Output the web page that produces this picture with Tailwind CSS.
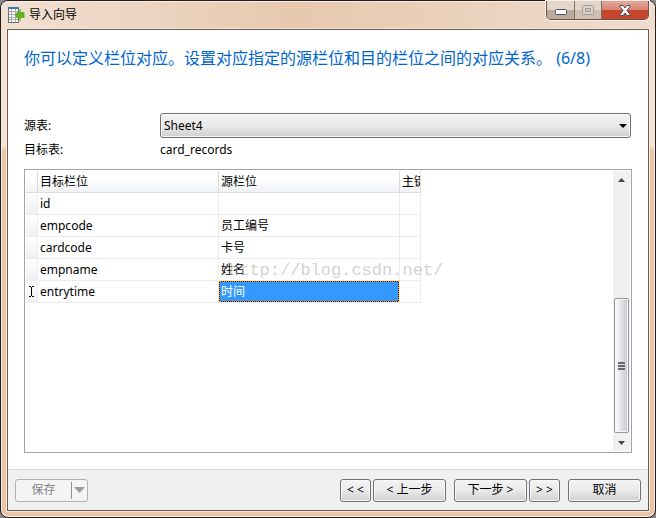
<!DOCTYPE html>
<html lang="zh-CN">
<head>
  <meta charset="UTF-8">
  <meta name="viewport" content="width=device-width, initial-scale=1.0">
  <title>导入向导</title>
  <script src="https://cdn.jsdelivr.net/npm/@tailwindcss/browser@4"></script>
</head>
<body class="h-screen overflow-hidden bg-[#8a8a8a] font-['Noto_Sans','Noto_Sans_CJK_SC',sans-serif] text-xs text-black">
  <div class="flex h-full flex-col rounded-lg border border-[#241c1c] bg-linear-to-b from-[#f3e2d5] from-28% to-[#e8c6ab] to-29% px-1.5 pb-1.5 shadow-[inset_0_0_0_1px_#fbeee4]">
    <!-- title bar -->
    <header class="-mx-1.5 flex h-7 shrink-0 items-start justify-between rounded-t-lg bg-linear-to-r from-[#f1e0d3] via-[#e6c8ae] via-45% to-[#efdccd] px-1.5 shadow-[inset_0_1px_0_#fbeee4]">
      <div class="flex h-7 items-center gap-1">
        <svg class="ml-px h-4 w-[17px]" viewBox="0 0 17 16" shape-rendering="crispEdges">
          <rect x="0" y="0" width="11" height="16" fill="#6d7276"/>
          <rect x="1" y="2" width="9" height="13" fill="#a9adb0"/>
          <rect x="0" y="0" width="11" height="2" fill="#3f78b5"/>
          <path d="M1 2h2v2H1zM4 2h3v2H4zM8 2h2v2H8zM1 5h2v2H1zM4 5h3v2H4zM8 5h2v2H8zM1 8h2v2H1zM4 8h3v2H4zM8 8h2v2H8zM1 11h2v1H1zM4 11h3v1H4zM8 11h2v1H8zM1 13h2v2H1zM4 13h3v2H4zM8 13h2v2H8z" fill="#fff"/>
          <path d="M6.500 8l6-6.500V5H16.500v6H12.500v3.500z" fill="#63b022" shape-rendering="auto"/>
        </svg>
        <h1>导入向导</h1>
      </div>
      <div class="flex h-[19px] overflow-hidden rounded-b-[5px] border border-t-0 border-[#65554c] shadow-[0_0_0_1px_#fbeee4]">
        <button type="button" aria-label="最小化" class="flex w-7 items-center justify-center border-r border-[#7d6c61] bg-linear-to-b from-[#e3d5ca] from-50% to-[#bba999] to-50%">
          <svg class="mt-1 h-[6px] w-3" viewBox="0 0 12 6"><rect x=".5" y=".5" width="11" height="5" rx="1" fill="#fff" stroke="#4f5266"/></svg>
        </button>
        <button type="button" aria-label="最大化" disabled class="flex w-[27px] items-center justify-center border-r border-[#7d6c61] bg-linear-to-b from-[#e3d5ca] from-50% to-[#cfc0b3] to-50%">
          <svg class="h-[10px] w-3" viewBox="0 0 12 10"><rect x=".5" y=".5" width="11" height="9" rx="1" fill="#ddd3ca" stroke="#a59c96"/><rect x="3.5" y="3.5" width="5" height="3" fill="#cfc3b9" stroke="#a59c96"/></svg>
        </button>
        <button type="button" aria-label="关闭" class="flex w-[46px] items-center justify-center bg-linear-to-b from-[#e2a295] from-10% via-[#d58472] via-48% to-[#c5452d] to-52%">
          <svg class="h-[11px] w-3" viewBox="0 0 12 11"><path d="M1 .5h3l2 2.500 2-2.500h3v1L8 5.500l3 4v1H8L6 8l-2 2.500H1v-1l3-4-3-4z" fill="#fff" stroke="#4b4a5c"/></svg>
        </button>
      </div>
    </header>

    <main class="flex min-h-0 flex-1 flex-col border border-[#6b5a52] bg-white shadow-[0_0_0_1px_#f9e9dd]">
      <div class="flex min-h-0 flex-1 flex-col px-4 pb-4">
        <h2 class="mt-4 h-6 text-base leading-6 whitespace-nowrap text-[#0066cc]">你可以定义栏位对应。设置对应指定的源栏位和目的栏位之间的对应关系。 (6/8)</h2>

        <div class="mt-[43px] grid grid-cols-[136px_1fr] items-center gap-y-[3px] pr-px">
          <label for="source">源表:</label>
          <div class="relative">
            <select id="source" class="block h-[25px] w-full appearance-none rounded-[3px] border border-[#707070] bg-linear-to-b from-[#f2f2f2] via-[#ebebeb] via-48% to-[#cfcfcf] px-[3px] shadow-[inset_0_0_0_1px_#f8f8f8]">
              <option>Sheet4</option>
            </select>
            <svg class="pointer-events-none absolute top-[11px] right-1 h-1 w-2" viewBox="0 0 8 4"><path d="M0 0h8L4 4z"/></svg>
          </div>
          <span>目标表:</span>
          <span class="leading-[18px]">card_records</span>
        </div>

        <div class="relative mt-[10px] flex min-h-0 flex-1 justify-between border border-[#a0a3a8] p-px">
          <table class="w-[395px] table-fixed border-separate border-spacing-0 self-start text-left leading-4">
            <colgroup>
              <col class="w-3">
              <col class="w-[181px]">
              <col class="w-[181px]">
              <col class="w-[21px]">
            </colgroup>
            <thead>
              <tr class="h-[22px] *:border-r *:border-b *:border-[#dcdcdc] *:bg-linear-to-b *:from-white *:from-40% *:to-[#eff1f4] *:font-normal">
                <th></th>
                <th class="pl-0.5">目标栏位</th>
                <th class="pl-0.5">源栏位</th>
                <th class="overflow-hidden pl-0.5 whitespace-nowrap">主键</th>
              </tr>
            </thead>
            <tbody class="*:h-[22px] *:*:border-r *:*:border-b *:*:border-[#ececec]">
              <tr>
                <td class="bg-linear-to-b from-white to-[#eff0f3]"></td>
                <td class="pl-0.5">id</td>
                <td></td>
                <td></td>
              </tr>
              <tr>
                <td class="bg-linear-to-b from-white to-[#eff0f3]"></td>
                <td class="pl-0.5">empcode</td>
                <td class="pl-0.5">员工编号</td>
                <td></td>
              </tr>
              <tr>
                <td class="bg-linear-to-b from-white to-[#eff0f3]"></td>
                <td class="pl-0.5">cardcode</td>
                <td class="pl-0.5">卡号</td>
                <td></td>
              </tr>
              <tr>
                <td class="bg-linear-to-b from-white to-[#eff0f3]"></td>
                <td class="pl-0.5">empname</td>
                <td class="pl-0.5">姓名</td>
                <td></td>
              </tr>
              <tr>
                <td class="bg-linear-to-b from-white to-[#eff0f3]">
                  <svg class="mx-auto h-[11px] w-[7px]" viewBox="0 0 7 11" shape-rendering="crispEdges"><path d="M1 0h2v1H1zM4 0h2v1H4zM3 1h1v9H3zM1 10h2v1H1zM4 10h2v1H4z"/></svg>
                </td>
                <td class="pl-0.5">entrytime</td>
                <td class="bg-[#3399ff] text-white">
                  <!-- focused cell, two-tone dotted frame -->
                  <div class="h-[21px] border border-dotted border-[#ff8c1a] bg-[linear-gradient(#3399ff,#3399ff),linear-gradient(#3a1c00,#3a1c00)] [background-clip:padding-box,border-box] pl-px leading-[19px]">时间</div>
                </td>
                <td></td>
              </tr>
            </tbody>
          </table>

          <!-- scrollbar -->
          <div class="flex w-[17px] flex-col items-center bg-[#f0f0f0]">
            <svg class="mt-[7px] h-1 w-[7px] shrink-0" viewBox="0 0 7 4"><path d="M0 4h7L3.5 0z" fill="#444"/></svg>
            <div class="flex-1"></div>
            <div class="flex h-[135px] w-[15px] shrink-0 flex-col items-center justify-center gap-px rounded-[2px] border border-[#979797] bg-linear-to-r from-[#f5f5f5] from-20% via-[#dfe0e4] via-50% to-[#c9cad1] shadow-[inset_0_0_0_1px_#f5f5f5]">
              <i class="h-0.5 w-[7px] bg-[#666]"></i>
              <i class="h-0.5 w-[7px] bg-[#666]"></i>
              <i class="h-0.5 w-[7px] bg-[#666]"></i>
            </div>
            <svg class="mt-2 mb-1.5 h-1 w-[7px] shrink-0" viewBox="0 0 7 4"><path d="M0 0h7L3.5 4z" fill="#444"/></svg>
          </div>

          <span class="pointer-events-none absolute top-[89px] left-[204px] font-['Liberation_Mono',monospace] text-[17px] leading-6 text-[#b4b4b0]/60">http://blog.csdn.net/</span>
        </div>
      </div>

      <footer class="flex h-[41px] shrink-0 items-center justify-between border-t border-[#d5d8d8] bg-[#f0f0f0] px-[7px]">
        <div class="flex h-[23px] w-[73px] items-center rounded-[3px] border border-[#adb2b5] bg-[#f4f4f4] text-[#838383]">
          <button type="button" disabled class="flex-1">保存</button>
          <button type="button" disabled aria-label="更多" class="flex h-[17px] w-4 items-center justify-center border-l border-[#8f8f8f]">
            <svg class="h-[6px] w-[11px]" viewBox="0 0 11 6"><path d="M0 0h11L5.5 6z" fill="#9a9a9a"/></svg>
          </button>
        </div>
        <div class="flex gap-2 *:flex *:gap-0.5 **:[button]:h-[23px] **:[button]:rounded-[3px] **:[button]:border **:[button]:border-[#707070] **:[button]:bg-linear-to-b **:[button]:from-[#f3f3f3] **:[button]:via-[#ebebeb] **:[button]:via-48% **:[button]:to-[#cfcfcf] **:[button]:shadow-[inset_0_0_0_1px_#f8f8f8]">
          <div>
            <button type="button" class="w-[31px]">&lt; &lt;</button>
            <button type="button" class="w-[73px]">&lt; 上一步</button>
          </div>
          <div>
            <button type="button" class="w-[73px]">下一步 &gt;</button>
            <button type="button" class="w-[31px]">&gt; &gt;</button>
          </div>
          <div>
            <button type="button" class="w-[73px]">取消</button>
          </div>
        </div>
      </footer>
    </main>
  </div>
</body>
</html>
